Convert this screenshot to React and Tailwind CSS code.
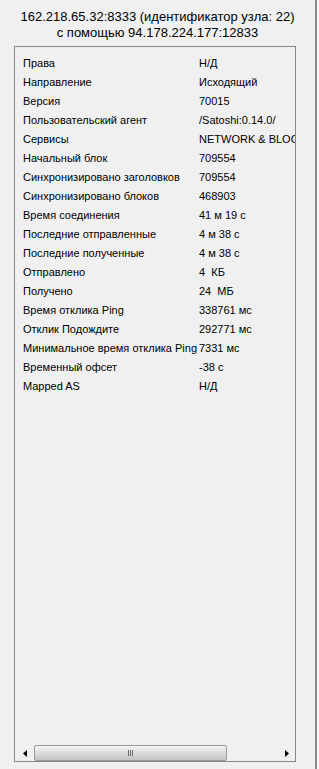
import React from "react";

const rows = [
  ["Права", "Н/Д"],
  ["Направление", "Исходящий"],
  ["Версия", "70015"],
  ["Пользовательский агент", "/Satoshi:0.14.0/"],
  ["Сервисы", "NETWORK & BLOOM"],
  ["Начальный блок", "709554"],
  ["Синхронизировано заголовков", "709554"],
  ["Синхронизировано блоков", "468903"],
  ["Время соединения", "41 м 19 с"],
  ["Последние отправленные", "4 м 38 с"],
  ["Последние полученные", "4 м 38 с"],
  ["Отправлено", "4\u00a0 КБ"],
  ["Получено", "24\u00a0 МБ"],
  ["Время отклика Ping", "338761 мс"],
  ["Отклик Подождите", "292771 мс"],
  ["Минимальное время отклика Ping", "7331 мс"],
  ["Временный офсет", "-38 с"],
  ["Mapped AS", "Н/Д"],
];

const App = () => {
  return (
    <div className="w-[319px] h-[769px] bg-[#f0f0f0] flex text-black" style={{ fontFamily: "'Liberation Sans', Arial, sans-serif" }}>
      <div className="w-[315px] flex flex-col">
        {/* заголовок */}
        <div className="h-[46px] pt-[9px] text-center text-[13px] leading-[16px] whitespace-nowrap">
          <div>162.218.65.32:8333 (идентификатор узла: 22)</div>
          <div>с помощью 94.178.224.177:12833</div>
        </div>

        {/* таблица */}
        <div className="ml-[14px] w-[282px] h-[716px] border border-[#828790] bg-[#f0f0f0] flex flex-col">
          <div className="flex-1 overflow-hidden pt-[7px]">
            {rows.map((row, index) => (
              <div key={index} className="flex h-[19px] items-center text-[11px] whitespace-nowrap">
                <div className="w-[184px] pl-[8px] overflow-hidden">{row[0]}</div>
                <div className="flex-1 overflow-hidden">{row[1]}</div>
              </div>
            ))}
          </div>

          {/* полоса прокрутки */}
          <div className="h-[16px] flex bg-[#f0f0f0]">
            <div className="w-[19px] flex items-center justify-center">
              <svg width="4" height="7" viewBox="0 0 4 7"><path d="M4 0 L0 3.5 L4 7 Z" fill="#000" /></svg>
            </div>
            <div className="w-[193px] border border-[#9a9a9a] rounded-[2px] bg-gradient-to-b from-[#f4f4f4] via-[#dcdcdc] to-[#c4c4c4] flex items-center justify-center">
              <div className="w-[1px] h-[6px] bg-[#6a6a6a]" />
              <div className="w-[1px] h-[6px] bg-[#6a6a6a] ml-[1px]" />
              <div className="w-[1px] h-[6px] bg-[#6a6a6a] ml-[1px]" />
            </div>
            <div className="flex-1 flex items-center justify-end pr-[6px]">
              <svg width="4" height="7" viewBox="0 0 4 7"><path d="M0 0 L4 3.5 L0 7 Z" fill="#000" /></svg>
            </div>
          </div>
        </div>
      </div>
      <div className="w-[2px] bg-[#8c8c8c]" />
      <div className="flex-1 bg-[#f7f7f7]" />
    </div>
  );
};

export default App;
